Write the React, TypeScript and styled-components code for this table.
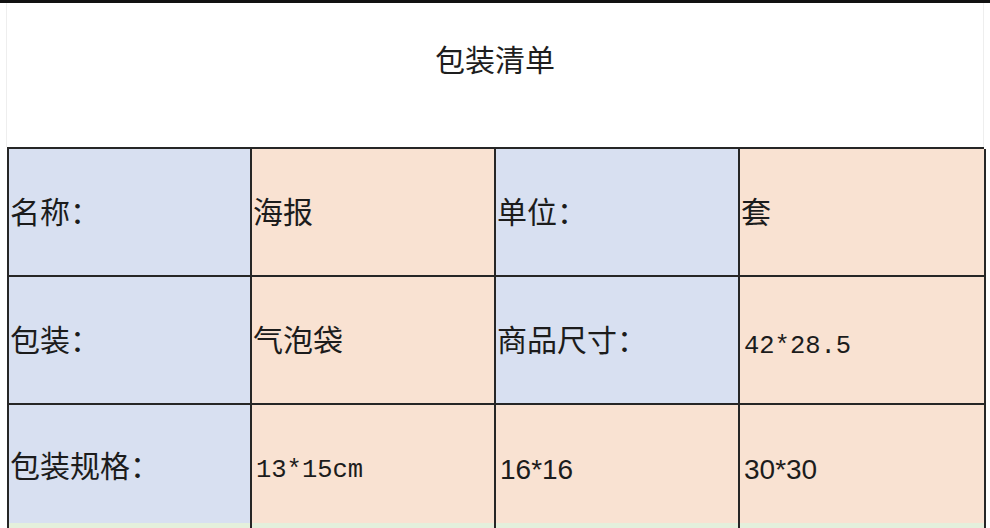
import React from 'react';
import styled, { createGlobalStyle } from 'styled-components';

const GlobalStyle = createGlobalStyle`
  html, body {
    margin: 0;
    padding: 0;
    background: #ffffff;
    overflow: hidden;
  }
`;

const BLUE = '#d8e0f1';
const PEACH = '#f9e2d2';
const GREEN = '#e4f0dc';
const LINE = '#262626';

type Tone = 'blue' | 'peach' | 'green';
type Face = 'cjk' | 'mono' | 'sans';

const toneColor = (tone: Tone) =>
  tone === 'blue' ? BLUE : tone === 'peach' ? PEACH : GREEN;

const Page = styled.div`
  width: 990px;
  height: 528px;
  overflow: hidden;
  background: #fff;
  border-top: 3px solid #111;
  box-sizing: border-box;
`;

const Header = styled.div`
  height: 144px;
  margin: 0 6px;
  border-left: 1px solid #eeeeee;
  border-right: 1px solid #eeeeee;
  display: flex;
  justify-content: center;
  padding-top: 35px;
  box-sizing: border-box;
`;

const Title = styled.h1`
  margin: 0;
  font-family: 'Noto Sans CJK SC', 'Noto Sans', sans-serif;
  font-weight: 400;
  font-size: 30px;
  line-height: 40px;
  color: #1e1e1e;
`;

const Grid = styled.div`
  margin-left: 7px;
  width: 977px;
  display: grid;
  grid-template-columns: 243px 244px 244px 246px;
  grid-template-rows: 128px 128px 118px 128px;
  border-top: 2px solid ${LINE};
  border-left: 2px solid ${LINE};
  box-sizing: border-box;
`;

const Cell = styled.div<{ $tone: Tone; $face: Face; $open?: boolean }>`
  background: ${p => toneColor(p.$tone)};
  border-right: 2px solid ${LINE};
  border-bottom: ${p => (p.$open ? 'none' : `2px solid ${LINE}`)};
  display: flex;
  align-items: center;
  padding-left: ${p => (p.$face === 'cjk' ? '1px' : '4px')};
  padding-top: ${p => (p.$face === 'cjk' ? '0' : '12px')};
  padding-bottom: ${p => (p.$open || p.$face !== 'cjk' ? '0' : '4px')};
  color: #1c1c1c;
  font-family: ${p =>
    p.$face === 'mono'
      ? "'Liberation Mono', monospace"
      : p.$face === 'sans'
      ? "'Liberation Sans', Arial, sans-serif"
      : "'Noto Sans CJK SC', 'Noto Sans', sans-serif"};
  font-size: ${p => (p.$face === 'cjk' ? '30px' : p.$face === 'mono' ? '25.5px' : '28px')};
  white-space: nowrap;
`;

type CellData = { text: string; tone: Tone; face: Face };

const rows: CellData[][] = [
  [
    { text: '名称：', tone: 'blue', face: 'cjk' },
    { text: '海报', tone: 'peach', face: 'cjk' },
    { text: '单位：', tone: 'blue', face: 'cjk' },
    { text: '套', tone: 'peach', face: 'cjk' },
  ],
  [
    { text: '包装：', tone: 'blue', face: 'cjk' },
    { text: '气泡袋', tone: 'peach', face: 'cjk' },
    { text: '商品尺寸：', tone: 'blue', face: 'cjk' },
    { text: '42*28.5', tone: 'peach', face: 'mono' },
  ],
  [
    { text: '包装规格：', tone: 'blue', face: 'cjk' },
    { text: '13*15cm', tone: 'peach', face: 'mono' },
    { text: '16*16', tone: 'peach', face: 'sans' },
    { text: '30*30', tone: 'peach', face: 'sans' },
  ],
  [
    { text: '', tone: 'green', face: 'cjk' },
    { text: '', tone: 'green', face: 'cjk' },
    { text: '', tone: 'green', face: 'cjk' },
    { text: '', tone: 'green', face: 'cjk' },
  ],
];

const App: React.FC = () => (
  <>
    <GlobalStyle />
    <Page>
      <Header>
        <Title>包装清单</Title>
      </Header>
      <Grid>
        {rows.map((row, r) =>
          row.map((cell, c) => (
            <Cell
              key={`${r}-${c}`}
              $tone={cell.tone}
              $face={cell.face}
              $open={r === 2}
            >
              {cell.text}
            </Cell>
          ))
        )}
      </Grid>
    </Page>
  </>
);

export default App;
